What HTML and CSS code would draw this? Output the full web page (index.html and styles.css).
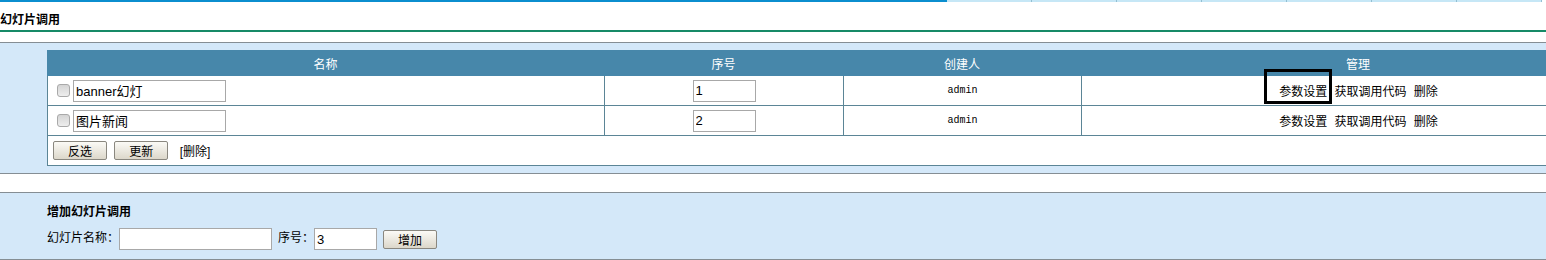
FILE: index.html
```html
<!DOCTYPE html>
<html lang="zh-CN">
<head>
    <meta charset="UTF-8">
    <title>幻灯片调用</title>
    <link rel="stylesheet" href="styles.css">
</head>
<body>
    <div class="topbar">
        <div class="topbar-active"></div>
        <div class="topbar-tab"></div>
        <div class="topbar-tab"></div>
        <div class="topbar-tab"></div>
        <div class="topbar-tab"></div>
        <div class="topbar-tab"></div>
        <div class="topbar-tab"></div>
        <div class="topbar-tab"></div>
    </div>

    <div class="page-title">幻灯片调用</div>

    <div class="panel list-panel">
        <table class="slide-table">
            <colgroup>
                <col class="col-name">
                <col class="col-order">
                <col class="col-user">
                <col class="col-manage">
            </colgroup>
            <thead>
                <tr>
                    <th>名称</th>
                    <th>序号</th>
                    <th>创建人</th>
                    <th>管理</th>
                </tr>
            </thead>
            <tbody>
                <tr>
                    <td class="name-cell"><input type="checkbox" class="check"><input type="text" class="name-input" value="banner幻灯"></td>
                    <td class="center"><input type="text" class="order-input" value="1"></td>
                    <td class="center user">admin</td>
                    <td class="center actions">
                        <span class="action focused">参数设置</span>
                        <span class="action">获取调用代码</span>
                        <span class="action">删除</span>
                    </td>
                </tr>
                <tr>
                    <td class="name-cell"><input type="checkbox" class="check"><input type="text" class="name-input" value="图片新闻"></td>
                    <td class="center"><input type="text" class="order-input" value="2"></td>
                    <td class="center user">admin</td>
                    <td class="center actions">
                        <span class="action">参数设置</span>
                        <span class="action">获取调用代码</span>
                        <span class="action">删除</span>
                    </td>
                </tr>
                <tr>
                    <td colspan="4" class="toolbar">
                        <button class="btn">反选</button>
                        <button class="btn">更新</button>
                        <span class="del-link">[删除]</span>
                    </td>
                </tr>
            </tbody>
        </table>
    </div>

    <div class="panel add-panel">
        <div class="add-title">增加幻灯片调用</div>
        <div class="add-row">
            <span class="label">幻灯片名称：</span>
            <input type="text" class="name-input">
            <span class="label order-label">序号：</span>
            <input type="text" class="order-input" value="3">
            <button class="btn add-btn">增加</button>
        </div>
    </div>
</body>
</html>
```

FILE: styles.css
```css
* {
    margin: 0;
    padding: 0;
    box-sizing: border-box;
}

html, body {
    overflow: hidden;
}

body {
    font-family: 'Liberation Sans', 'Noto Sans CJK SC', sans-serif;
    font-size: 12px;
    color: #000;
    background: #fff;
}

/* top tab strip */
.topbar {
    display: flex;
    height: 2px;
}

.topbar-active {
    width: 947px;
    background: #0b8ecf;
}

.topbar-tab {
    width: 85px;
    background: #c6e7f6;
    border-right: 1px solid #93bfd2;
}

.page-title {
    height: 30px;
    padding-top: 9px;
    line-height: 19px;
    font-weight: bold;
    border-bottom: 2px solid #178a67;
}

.panel {
    background: #d4e8f9;
    border-top: 1px solid #858e94;
    border-bottom: 1px solid #858e94;
}

.list-panel {
    margin-top: 10px;
    padding: 7px 0 7px 47px;
}

/* slide list */
.slide-table {
    width: 1588px;
    table-layout: fixed;
    border-collapse: separate;
    border-spacing: 0;
    background: #fff;
}

.col-name { width: 557px; }
.col-order { width: 239px; }
.col-user { width: 238px; }
.col-manage { width: 554px; }

.slide-table th {
    height: 26px;
    background: #4787aa;
    color: #fff;
    font-weight: normal;
    text-align: center;
}

.slide-table td {
    height: 30px;
    border-left: 1px solid #5b8596;
    border-bottom: 1px solid #5b8596;
    vertical-align: middle;
}

.center {
    text-align: center;
}

.name-cell {
    padding-left: 5px;
}

.check {
    appearance: none;
    width: 13px;
    height: 13px;
    margin: 0 3px 0 4px;
    vertical-align: middle;
    border: 1px solid #a9a9a9;
    border-radius: 3px;
    background: linear-gradient(#d4d4d4, #eeeeee);
}

input[type="text"] {
    height: 22px;
    border: 1px solid #a8a8a8;
    padding: 0 2px;
    font-family: 'Liberation Sans', 'Noto Sans CJK SC', sans-serif;
    font-size: 13px;
    color: #000;
    vertical-align: middle;
    background: #fff;
    outline: none;
}

.name-input {
    width: 153px;
}

.order-input {
    width: 63px;
}

.user {
    font-family: 'Liberation Mono', monospace;
    font-size: 10px;
}

.action {
    margin: 0 2px;
}

.focused {
    position: relative;
}

.focused::before {
    content: '';
    position: absolute;
    left: -15px;
    right: -5px;
    top: -16px;
    bottom: -5px;
    border: 3px solid #000;
}

.toolbar {
    padding-left: 5px;
}

.btn {
    width: 54px;
    height: 19px;
    margin-right: 4px;
    border: 1px solid #8a877f;
    border-radius: 2px;
    background: linear-gradient(#fbfaf6, #dcd7ca);
    font-family: 'Liberation Sans', 'Noto Sans CJK SC', sans-serif;
    font-size: 12px;
    line-height: 16px;
    padding-top: 2px;
    color: #000;
    vertical-align: middle;
}

.del-link {
    margin-left: 4px;
    vertical-align: middle;
}

/* add form */
.add-panel {
    margin-top: 18px;
    padding: 10px 0 9px 47px;
}

.add-title {
    height: 18px;
    line-height: 18px;
    font-weight: bold;
    margin-bottom: 7px;
}

.add-row {
    display: flex;
    align-items: center;
    height: 22px;
}

.label {
    line-height: 18px;
    margin-top: -2px;
}

.order-label {
    margin-left: 6px;
}

.add-btn {
    margin-left: 6px;
}
```
